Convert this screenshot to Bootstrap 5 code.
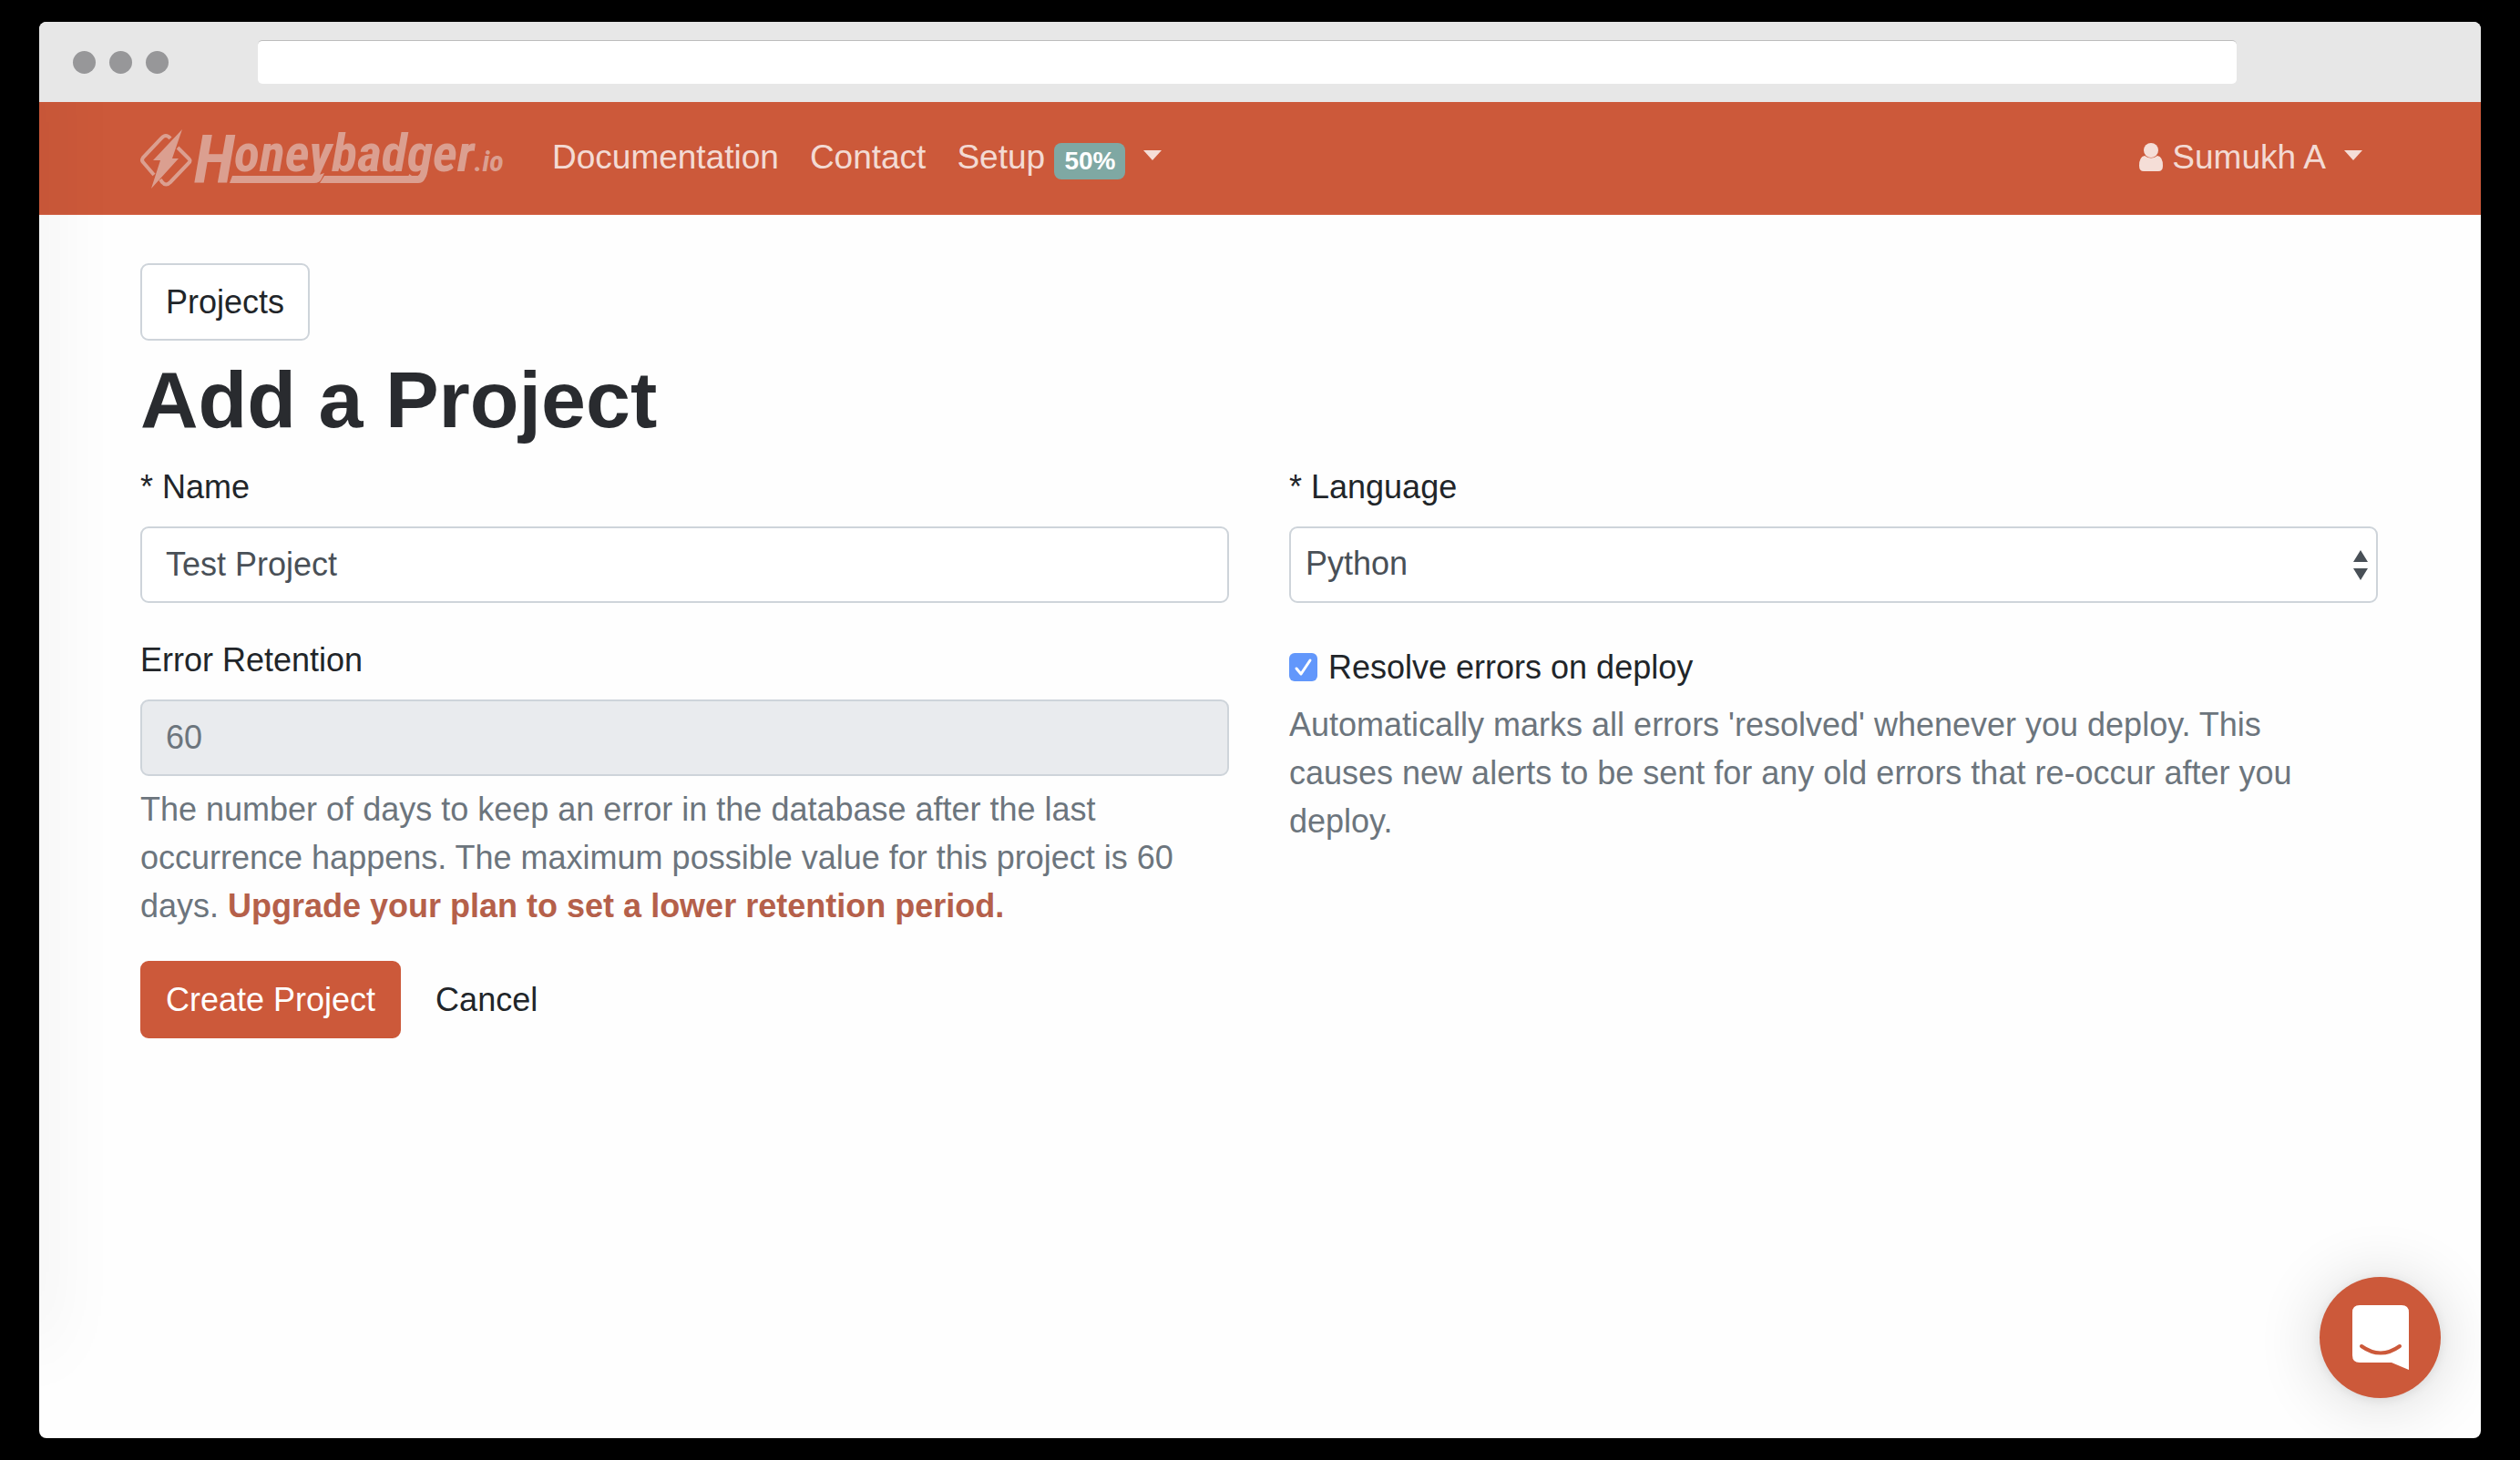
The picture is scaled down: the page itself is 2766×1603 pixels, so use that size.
<!DOCTYPE html>
<html lang="en">
<head>
<meta charset="utf-8">
<meta name="viewport" content="width=device-width, initial-scale=1">
<title>Add a Project - Honeybadger.io</title>
<link href="https://cdn.jsdelivr.net/npm/bootstrap@5.3.0/dist/css/bootstrap.min.css" rel="stylesheet">
<style>
  body {
    background: #000;
    color: #212529;
    font-family: "Liberation Sans", Arial, sans-serif;
    font-size: 36px;
    line-height: 53px;
    padding: 24px 43px;
  }
  .browser { border-radius: 8px; background: #fefefe; }
  .browser-bar { background: #e7e7e7; padding-right: 268px; }
  .browser-dots { gap: 15px; padding-left: 37px; width: 240px; }
  .browser-dots span { width: 25px; height: 25px; border-radius: 50%; background: #979799; }
  .browser-address {
    height: 48px; margin: 20px 0; border: 0; border-top: 1px solid #bdbdbd; border-radius: 5px; background: #fff;
  }
  .edge-shade::before {
    content: ""; position: absolute; z-index: 2; pointer-events: none;
    left: -20px; width: 20px; top: -60px; bottom: 100px;
    box-shadow: 0 0 80px rgba(0, 0, 0, .13);
  }
  .topnav {
    --bs-navbar-nav-link-padding-x: 17px;
    background: #cc593a; border-bottom: 1px solid #d5664a; height: 124px; padding: 0 0 3px;
  }
  .page-gutter { padding-left: 111px; padding-right: 113px; }
  .topnav .nav-link { color: rgba(255, 255, 255, .8); font-size: 37px; }
  .topnav .navbar-brand { padding: 0; margin: 0 34px 0 -1px; }
  .topnav .dropdown-toggle::after {
    border-top: 11px solid; border-left: 10px solid transparent; border-right: 10px solid transparent;
    margin-left: 20px; vertical-align: 9px;
  }
  .setup-badge {
    background: #7fa8a3; color: #fff; font-size: 28px; line-height: 40px;
    padding: 0 11px; border-radius: 8px; vertical-align: -1px;
  }
  .wordmark { font-family: "Roboto Condensed", "Liberation Sans", sans-serif; font-weight: 700; font-style: italic; }
  .user-icon { width: 26px; height: 31px; vertical-align: -3px; }
  .content-area { padding-top: 53px; padding-bottom: 53px; }
  .btn-lg-ui {
    --bs-btn-font-size: 36px; --bs-btn-line-height: 53px;
    --bs-btn-padding-x: 26px; --bs-btn-padding-y: 14px;
    --bs-btn-border-width: 2px; --bs-btn-border-radius: 9px;
  }
  .btn-crumb { --bs-btn-border-color: #ced4da; --bs-btn-color: #212529; --bs-btn-bg: #fff; }
  .btn-create {
    --bs-btn-bg: #cc593a; --bs-btn-border-color: #cc593a; --bs-btn-color: #fff;
    --bs-btn-hover-bg: #b64d30; --bs-btn-hover-color: #fff;
  }
  .page-title { font-size: 88px; line-height: 106px; font-weight: 700; color: #292b2f; margin: 12px 0 16px; }
  .form-row { --bs-gutter-x: 66px; }
  .form-label { margin-bottom: 17px; }
  .field, .field-select {
    font-size: 36px; line-height: 53px; height: 84px; color: #495057;
    border: 2px solid #ced4da; border-radius: 9px; background-color: #fff;
  }
  .field { padding: 0 26px; }
  .field:disabled { background: #e9ebee; color: #6c757d; }
  .field-select {
    padding: 0 40px 3px 16px;
    background-image: url("data:image/svg+xml,%3Csvg xmlns='http://www.w3.org/2000/svg' viewBox='0 0 16 33'%3E%3Cpath fill='%23495057' d='M8 0l8 13H0zM0 20h16L8 33z'/%3E%3C/svg%3E");
    background-size: 16px 33px; background-position: right 9px center;
  }
  .field-gap { margin-bottom: 36px; }
  .hint { color: #6c757d; margin-top: 10px; padding-right: 16px; }
  .hint a { color: #b5604a; font-weight: 700; text-decoration: none; }
  .check-row { gap: 12px; padding-top: 8px; }
  .check-row .form-check-input {
    width: 31px; height: 31px; margin: 0; border: 0; border-radius: 6px;
    background-color: #6297fb; background-size: 31px 31px;
    background-image: url("data:image/svg+xml,%3Csvg xmlns='http://www.w3.org/2000/svg' viewBox='0 0 31 31'%3E%3Cpath fill='none' stroke='%23fff' stroke-width='3' stroke-linecap='round' stroke-linejoin='round' d='M8 17l5 6L23 8'/%3E%3C/svg%3E");
  }
  .actions { margin-top: 34px; gap: 10px; }
  .chat-launcher {
    position: absolute; right: 44px; bottom: 44px; width: 133px; height: 133px;
    border: 0; border-radius: 50%; background: #cc593a;
    box-shadow: 0 2px 12px rgba(0, 0, 0, .08), 0 4px 70px rgba(0, 0, 0, .16);
  }
</style>
<script src="https://cdn.jsdelivr.net/npm/bootstrap@5.3.0/dist/js/bootstrap.bundle.min.js"></script>
</head>
<body class="min-vh-100 d-flex flex-column">
<div class="browser flex-grow-1 d-flex flex-column overflow-hidden position-relative">
  <div class="browser-bar d-flex align-items-center">
    <div class="browser-dots d-flex flex-shrink-0"><span></span><span></span><span></span></div>
    <input class="browser-address flex-grow-1" type="text" aria-label="Address">
  </div>

  <div class="edge-shade flex-grow-1 position-relative overflow-hidden">
    <nav class="topnav navbar navbar-expand">
      <div class="page-gutter d-flex align-items-center w-100">
        <a class="navbar-brand" href="#" aria-label="Honeybadger.io">
          <svg class="d-block overflow-visible" width="402" height="70" viewBox="0 0 402 70" fill="#db9f90">
            <path d="M34 15q-5-6-10 0L4 36q-2 3 0 5l12 14M42 25l12 12q3 3 0 5L34 63q-5 5-9 0l-2-3" fill="none" stroke="#db9f90" stroke-width="4"/>
            <path d="M47 5L15 39h8L13 70l30-33h-7z"/>
            <text class="wordmark" x="60" y="64" font-size="74">H<tspan dy="-13" font-size="58">oneybadger</tspan><tspan font-size="32">.io</tspan></text>
            <path d="M102 56h92l9-3-3 6q-2 5-8 5H99zM203 56h112l-2 4q-2 4-7 4H198z"/>
          </svg>
        </a>
        <ul class="navbar-nav me-auto">
          <li class="nav-item"><a class="nav-link" href="#">Documentation</a></li>
          <li class="nav-item"><a class="nav-link" href="#">Contact</a></li>
          <li class="nav-item dropdown"><a class="nav-link dropdown-toggle" href="#" role="button" data-bs-toggle="dropdown">Setup <span class="setup-badge badge">50%</span></a></li>
        </ul>
        <ul class="navbar-nav">
          <li class="nav-item dropdown"><a class="nav-link dropdown-toggle" href="#" role="button" data-bs-toggle="dropdown"><svg class="user-icon" viewBox="0 0 26 31" fill="currentColor"><circle cx="13" cy="8" r="8"/><path d="M6 14q7 5 14 0 6 1 6 11 0 6-5 6H5q-5 0-5-6 0-10 6-11z"/></svg> Sumukh A</a></li>
        </ul>
      </div>
    </nav>

    <main class="page-gutter content-area">
      <a class="btn btn-lg-ui btn-crumb" href="#">Projects</a>
      <h1 class="page-title">Add a Project</h1>
      <form>
        <div class="row form-row">
          <div class="col-6">
            <div class="field-gap">
              <label class="form-label d-block" for="name">* Name</label>
              <input class="form-control field" id="name" type="text" value="Test Project">
            </div>
            <label class="form-label d-block" for="retention">Error Retention</label>
            <input class="form-control field" id="retention" type="text" value="60" disabled>
            <div class="hint">The number of days to keep an error in the database after the last occurrence happens. The maximum possible value for this project is 60 days. <a href="#">Upgrade your plan to set a lower retention period.</a></div>
          </div>
          <div class="col-6">
            <div class="field-gap">
              <label class="form-label d-block" for="language">* Language</label>
              <select class="form-select field-select" id="language"><option>Python</option></select>
            </div>
            <div class="check-row d-flex align-items-center">
              <input class="form-check-input" type="checkbox" id="resolve" checked>
              <label for="resolve">Resolve errors on deploy</label>
            </div>
            <div class="hint">Automatically marks all errors 'resolved' whenever you deploy. This causes new alerts to be sent for any old errors that re-occur after you deploy.</div>
          </div>
        </div>
        <div class="actions d-flex">
          <button class="btn btn-lg-ui btn-create" type="submit">Create Project</button>
          <a class="btn btn-lg-ui" href="#">Cancel</a>
        </div>
      </form>
    </main>
  </div>

  <button class="chat-launcher d-flex align-items-center justify-content-center" type="button" aria-label="Open chat">
    <svg width="62" height="71" viewBox="0 0 62 71"><path fill="#fff" d="M8 0h46q8 0 8 8v63L43 63H8q-8 0-8-8V8q0-8 8-8z"/><path d="M10 45q21 15 42 0" fill="none" stroke="#cc593a" stroke-width="4" stroke-linecap="round"/></svg>
  </button>
</div>
</body>
</html>
